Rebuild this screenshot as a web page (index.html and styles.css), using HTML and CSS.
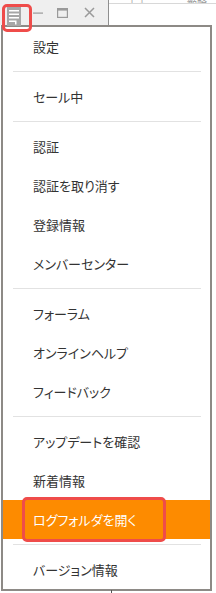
FILE: index.html
```html
<!DOCTYPE html>
<html lang="ja">
<head>
<meta charset="utf-8">
<link rel="stylesheet" href="styles.css">
</head>
<body>
<div class="top">
  <div class="titlebar">
    <svg class="menu-icon" width="14" height="19" viewBox="0 0 14 19">
      <rect x="0" y="0" width="14" height="19" fill="#a6a6a6"/>
      <rect x="2" y="3" width="10" height="1.5" fill="#fff"/>
      <rect x="2" y="6.5" width="10" height="1.5" fill="#fff"/>
      <rect x="2" y="10" width="10" height="1.5" fill="#fff"/>
      <rect x="2" y="13.5" width="6" height="1.5" fill="#fff"/>
      <rect x="8" y="13.5" width="1.5" height="4" fill="#fff"/>
    </svg>
    <svg class="win-btn" width="10" height="10" viewBox="0 0 10 10"><rect x="0" y="4.5" width="10" height="1.2" fill="#9a9a9a"/></svg>
    <svg class="win-btn" width="11" height="10" viewBox="0 0 11 10"><rect x="0.6" y="0.6" width="9.8" height="8.8" fill="none" stroke="#9a9a9a" stroke-width="1.2"/><rect x="0.6" y="0.6" width="9.8" height="2" fill="#9a9a9a"/></svg>
    <svg class="win-btn" width="11" height="11" viewBox="0 0 11 11"><path d="M1 1L10 10M10 1L1 10" stroke="#9a9a9a" stroke-width="1.5"/></svg>
  </div>
  <div class="pane">
    <div class="pane-head"><span class="ph-a">↑↓</span><span class="ph-b">縮略</span></div>
  </div>
</div>
<div class="menu">
  <div class="item">設定</div>
  <div class="sep"></div>
  <div class="item">セール中</div>
  <div class="sep"></div>
  <div class="item">認証</div>
  <div class="item">認証を取り消す</div>
  <div class="item">登録情報</div>
  <div class="item">メンバーセンター</div>
  <div class="sep"></div>
  <div class="item">フォーラム</div>
  <div class="item">オンラインヘルプ</div>
  <div class="item">フィードバック</div>
  <div class="sep"></div>
  <div class="item">アップデートを確認</div>
  <div class="item">新着情報</div>
  <div class="item active">ログフォルダを開く</div>
  <div class="sep"></div>
  <div class="item">バージョン情報</div>
</div>
<div class="cursor"></div>
<div class="mark mark-icon"></div>
<div class="mark mark-item"></div>
</body>
</html>
```
FILE: styles.css
```css
html, body {
  margin: 0;
  padding: 0;
  background: #ffffff;
}
body {
  width: 216px;
  height: 593px;
  overflow: hidden;
  position: relative;
  font-family: "Noto Sans CJK JP", "Noto Sans", sans-serif;
}
.top {
  display: flex;
  height: 25px;
}
.titlebar {
  width: 109px;
  height: 25px;
  background: #efefef;
  border-right: 1px solid #8f8f8f;
  display: flex;
  align-items: center;
  padding-left: 7px;
  box-sizing: border-box;
  gap: 0;
}
.menu-icon {
  margin-top: 8px;
  display: block;
}
.win-btn {
  display: block;
}
.titlebar .win-btn:nth-of-type(2) { margin-left: 12px; }
.titlebar .win-btn:nth-of-type(3) { margin-left: 14px; }
.titlebar .win-btn:nth-of-type(4) { margin-left: 16px; }
.pane {
  flex: 1;
  background: #fff;
}
.pane-head {
  height: 3px;
  border-bottom: 1px solid #d8d8d8;
  overflow: hidden;
  position: relative;
  font-size: 10px;
  color: #999;
  line-height: 2px;
}
.ph-a { margin-left: 18px; }
.ph-b { margin-left: 40px; }
.menu {
  margin-left: 1px;
  width: 211px;
  height: 566px;
  box-sizing: border-box;
  border: 2px solid #8d8a86;
  border-bottom-width: 2px;
  background: #fff;
  display: flex;
  flex-direction: column;
}
.item {
  height: 39px;
  flex: none;
  display: flex;
  align-items: center;
  padding-left: 30px;
  font-size: 13px;
  color: #333;
  font-feature-settings: "palt";
}
.item.active {
  background: #fd8b00;
  color: #fff;
}
.sep {
  height: 11px;
  flex: none;
  margin: 0 9px 0 10px;
  display: flex;
  align-items: center;
}
.sep::before {
  content: "";
  display: block;
  width: 100%;
  height: 1px;
  background: #e2e2e2;
}
.cursor {
  position: absolute;
  left: 111px;
  top: 590px;
  width: 1px;
  height: 3px;
  background: #555;
}
.mark {
  position: absolute;
  box-sizing: border-box;
  border: 3px solid #ef4c4a;
  border-radius: 5px;
}
.mark-icon {
  left: 2px;
  top: 4px;
  width: 30px;
  height: 28px;
}
.mark-item {
  left: 22px;
  top: 497px;
  width: 144px;
  height: 45px;
}
```
